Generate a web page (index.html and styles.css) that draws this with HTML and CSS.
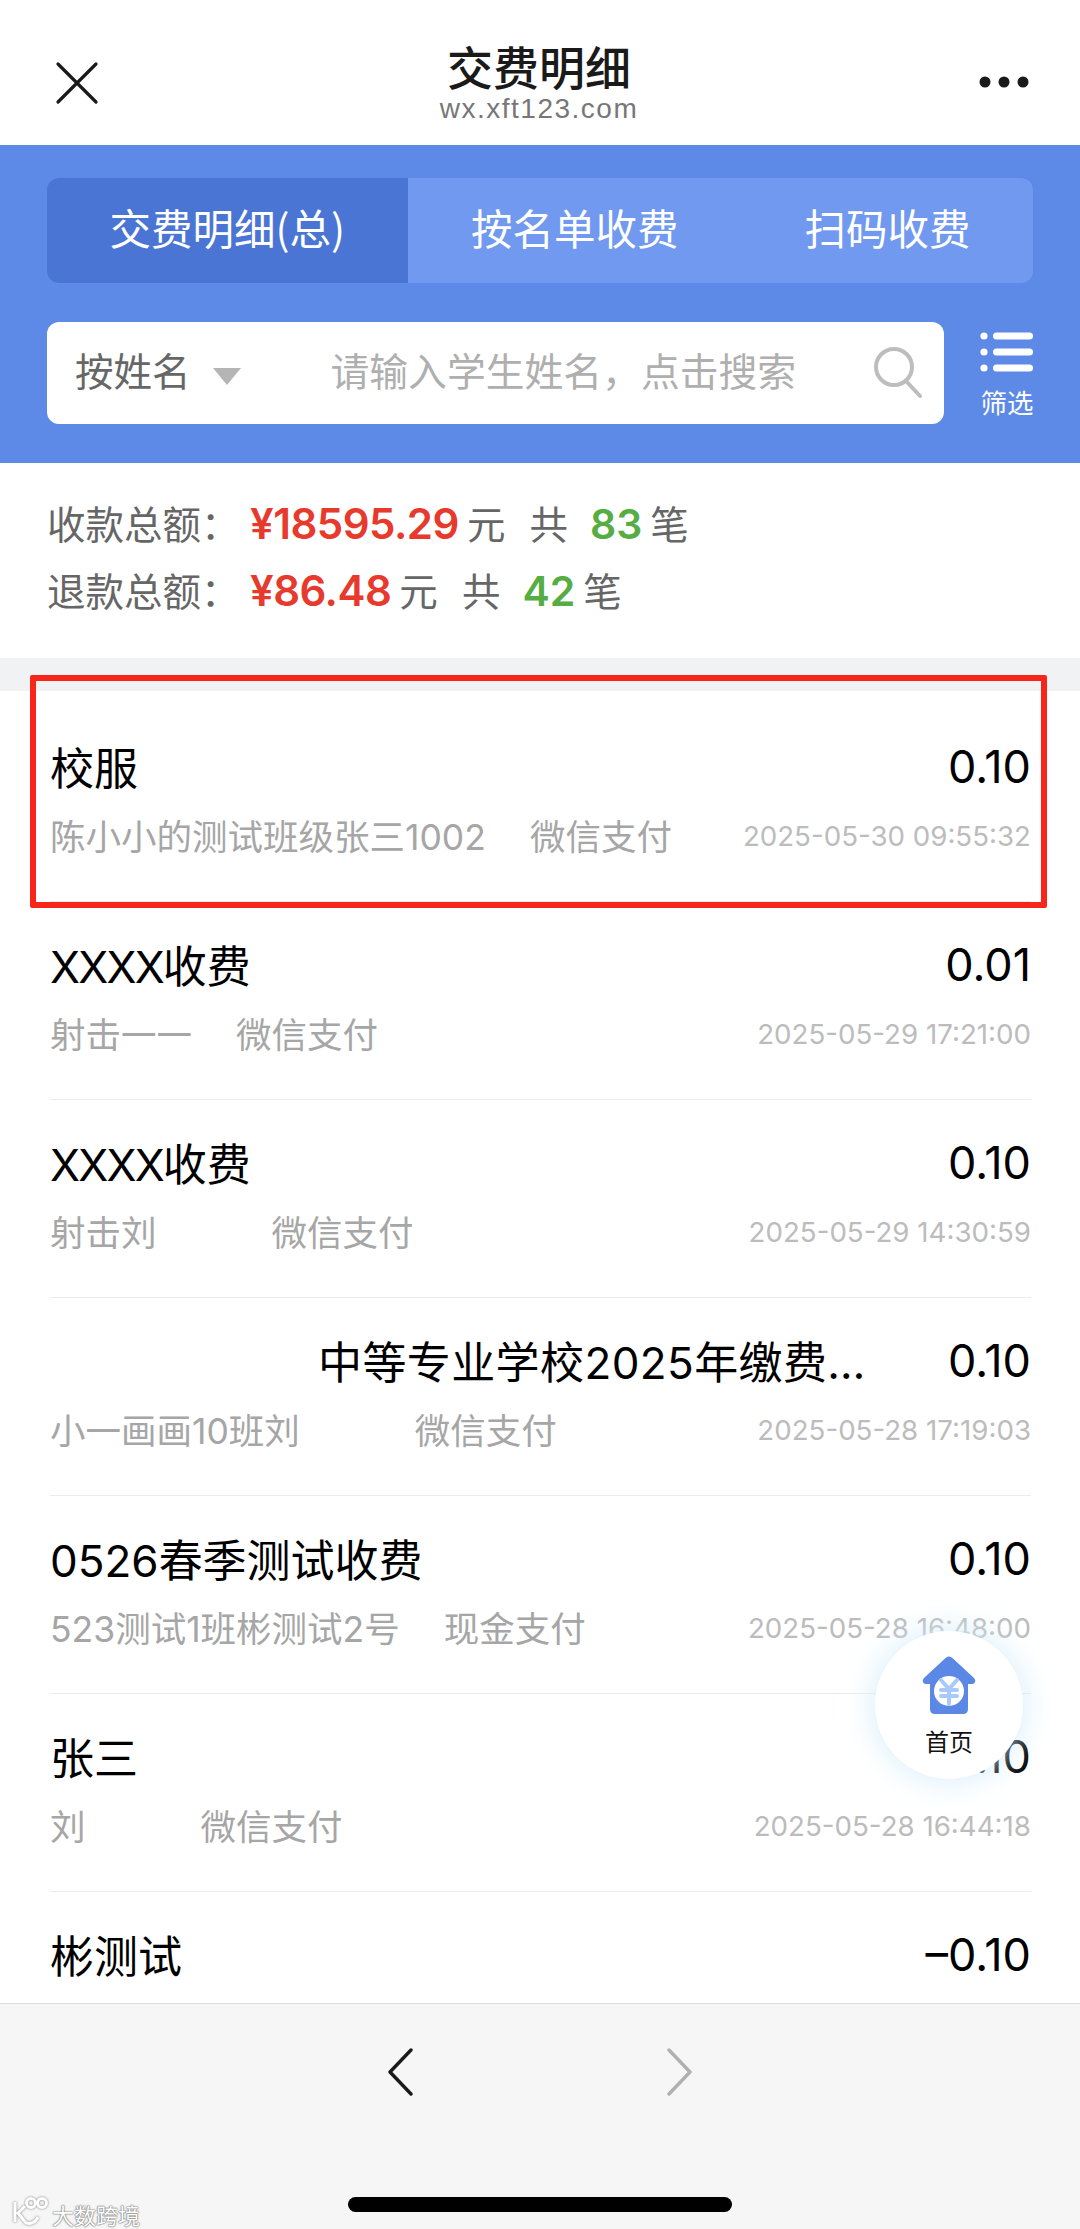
FILE: index.html
```html
<!DOCTYPE html>
<html lang="zh">
<head>
<meta charset="utf-8">
<title>交费明细</title>
<link rel="stylesheet" href="styles.css">
</head>
<body>
<div class="page">
  <header class="nav">
    <svg class="nav-close" width="44" height="44" viewBox="0 0 44 44"><path d="M3 3 L41 41 M41 3 L3 41" stroke="#1a1a1a" stroke-width="3.2" stroke-linecap="round"/></svg>
    <div class="nav-titles">
      <div class="nav-title">交费明细</div>
      <div class="nav-url">wx.xft123.com</div>
    </div>
    <svg class="nav-more" width="50" height="12" viewBox="0 0 50 12"><circle cx="6" cy="6" r="5.5" fill="#1a1a1a"/><circle cx="25" cy="6" r="5.5" fill="#1a1a1a"/><circle cx="44" cy="6" r="5.5" fill="#1a1a1a"/></svg>
  </header>

  <section class="blue">
    <div class="tabs">
      <div class="tab tab-active">交费明细(总)</div>
      <div class="tab">按名单收费</div>
      <div class="tab">扫码收费</div>
    </div>
    <div class="search-row">
      <div class="search">
        <span class="search-type">按姓名</span>
        <span class="search-caret"></span>
        <span class="search-ph">请输入学生姓名，点击搜索</span>
        <svg class="search-icon" width="50" height="54" viewBox="0 0 50 54"><circle cx="21" cy="21" r="18" fill="none" stroke="#bdbdbd" stroke-width="4"/><path d="M33 35 L47 50" stroke="#bdbdbd" stroke-width="4" stroke-linecap="round"/></svg>
      </div>
      <div class="filter">
        <svg width="54" height="40" viewBox="0 0 54 40"><g fill="#fff"><circle cx="4" cy="4" r="3.6"/><circle cx="4" cy="20" r="3.6"/><circle cx="4" cy="36" r="3.6"/><rect x="13" y="0.500" width="40" height="7" rx="3.500"/><rect x="13" y="16.500" width="40" height="7" rx="3.500"/><rect x="13" y="32.500" width="40" height="7" rx="3.500"/></g></svg>
        <span class="filter-label">筛选</span>
      </div>
    </div>
  </section>

  <section class="summary">
    <div class="sum-line"><span class="sum-label">收款总额：</span><b class="money">¥18595.29</b><span class="unit">元</span><span class="unit gong">共</span><b class="count">83</b><span class="unit">笔</span></div>
    <div class="sum-line"><span class="sum-label">退款总额：</span><b class="money">¥86.48</b><span class="unit">元</span><span class="unit gong">共</span><b class="count">42</b><span class="unit">笔</span></div>
  </section>

  <div class="gap"></div>

  <main class="list">
    <article class="row">
      <div class="row-top"><div class="row-title">校服</div><div class="row-amt">0.10</div></div>
      <div class="row-sub"><span class="row-name">陈小小的测试班级张三1002</span><span class="row-pay">微信支付</span><span class="row-date">2025-05-30 09:55:32</span></div>
    </article>
    <article class="row">
      <div class="row-top"><div class="row-title"><span class="xs">XXXX</span>收费</div><div class="row-amt">0.01</div></div>
      <div class="row-sub"><span class="row-name">射击一一</span><span class="row-pay">微信支付</span><span class="row-date">2025-05-29 17:21:00</span></div>
    </article>
    <article class="row">
      <div class="row-top"><div class="row-title"><span class="xs">XXXX</span>收费</div><div class="row-amt">0.10</div></div>
      <div class="row-sub"><span class="row-name mask-a">射击刘</span><span class="row-pay">微信支付</span><span class="row-date">2025-05-29 14:30:59</span></div>
    </article>
    <article class="row">
      <div class="row-top"><div class="row-title title-masked">中等专业学校2025年缴费…</div><div class="row-amt">0.10</div></div>
      <div class="row-sub"><span class="row-name mask-b">小一画画10班刘</span><span class="row-pay">微信支付</span><span class="row-date">2025-05-28 17:19:03</span></div>
    </article>
    <article class="row">
      <div class="row-top"><div class="row-title">0526春季测试收费</div><div class="row-amt">0.10</div></div>
      <div class="row-sub"><span class="row-name">523测试1班彬测试2号</span><span class="row-pay">现金支付</span><span class="row-date">2025-05-28 16:48:00</span></div>
    </article>
    <article class="row">
      <div class="row-top"><div class="row-title">张三</div><div class="row-amt">0.10</div></div>
      <div class="row-sub"><span class="row-name mask-c">刘</span><span class="row-pay">微信支付</span><span class="row-date">2025-05-28 16:44:18</span></div>
    </article>
    <article class="row">
      <div class="row-top"><div class="row-title">彬测试</div><div class="row-amt">–0.10</div></div>
    </article>
  </main>

  <footer class="bottom">
    <svg class="chev" width="26" height="48" viewBox="0 0 26 48"><path d="M24 2 L3 24 L24 46" fill="none" stroke="#1a1a1a" stroke-width="3.4" stroke-linecap="round" stroke-linejoin="round"/></svg>
    <svg class="chev" width="26" height="48" viewBox="0 0 26 48"><path d="M2 2 L23 24 L2 46" fill="none" stroke="#b0b0b0" stroke-width="3.4" stroke-linecap="round" stroke-linejoin="round"/></svg>
    <div class="home-bar"></div>
  </footer>

  <div class="highlight"></div>

  <div class="home-fab">
    <svg width="54" height="58" viewBox="0 0 54 58">
      <path d="M27 0.500 Q29 0.500 31 2.500 L52 22 Q55 26 51 28 L46 28 L46 53 Q46 58 41 58 L13 58 Q8 58 8 53 L8 28 L3 28 Q-1 26 2 22 L23 2.500 Q25 0.500 27 0.500 Z" fill="#5b88e4"/>
      <circle cx="27" cy="35" r="15" fill="#fff"/>
      <path d="M19 24 L27 33 L35 24 M19 34 H35 M19 40 H35 M27 33 V48" fill="none" stroke="#a9c8fb" stroke-width="4" stroke-linecap="round"/>
    </svg>
    <span class="home-label">首页</span>
  </div>

  <div class="mark">
    <svg class="mark-logo" width="38" height="30" viewBox="0 0 38 30"><g fill="none" stroke="#fff" stroke-width="3"><path d="M3 6 V26 M13 10 L6 17 L14 27 Q22 29 26 21"/><circle cx="19" cy="7" r="4.500"/><circle cx="30" cy="7" r="4.500"/></g></svg>
    <span class="mark-text">大数跨境</span>
  </div>
</div>
</body>
</html>
```
FILE: styles.css
```css
* { box-sizing: border-box; }
html, body { margin: 0; padding: 0; }
body {
  font-family: Inter, "Noto Sans CJK SC", sans-serif;
  background: #fff;
  color: #000;
}
.page {
  position: relative;
  width: 1080px;
  height: 2229px;
  display: flex;
  flex-direction: column;
  overflow: hidden;
}

/* top navigation */
.nav {
  height: 145px;
  flex: none;
  display: flex;
  align-items: flex-start;
  justify-content: space-between;
  padding: 0 51px 0 55px;
  background: #fff;
}
.nav-close { margin-top: 61px; }
.nav-more { margin-top: 76px; }
.nav-titles { text-align: center; padding-top: 37px; }
.nav-title {
  font-family: "Noto Sans CJK SC", sans-serif;
  font-size: 46px;
  line-height: 56px;
  font-weight: 500;
  color: #1a1a1a;
}
.nav-url {
  font-family: "Liberation Sans", sans-serif;
  font-size: 28px;
  line-height: 32px;
  letter-spacing: 1.5px;
  color: #777;
}

/* blue panel */
.blue {
  height: 318px;
  flex: none;
  background: #5c8ae6;
  padding: 33px 47px 0;
}
.tabs {
  height: 105px;
  display: flex;
  justify-content: space-between;
  background: #7099ef;
  border-radius: 12px;
  overflow: hidden;
}
.tab {
  display: flex;
  align-items: center;
  padding: 0 62.500px 8px;
  font-family: "Noto Sans CJK SC", sans-serif;
  font-size: 41.500px;
  white-space: nowrap;
  color: #fff;
}
.tab-active { background: #4a75d4; }
.search-row {
  display: flex;
  justify-content: space-between;
  margin-top: 39px;
}
.search {
  width: 897px;
  height: 102px;
  background: #fff;
  border-radius: 12px;
  display: flex;
  align-items: center;
  padding: 0 21px 0 28px;
  font-family: "Noto Sans CJK SC", sans-serif;
}
.search-type { font-size: 38.500px; color: #666; padding-bottom: 8px; }
.search-caret {
  width: 0;
  height: 0;
  margin: 6px 0 0 22px;
  border-left: 14px solid transparent;
  border-right: 14px solid transparent;
  border-top: 17px solid #b5b5b5;
}
.search-ph {
  margin-left: 90px;
  flex: 1;
  font-size: 38.800px;
  padding-bottom: 8px;
  color: #afafaf;
  white-space: nowrap;
}
.search-icon { flex: none; }
.filter {
  width: 54px;
  display: flex;
  flex-direction: column;
  align-items: center;
  padding-top: 10px;
  margin-right: -1px;
}
.filter-label {
  font-family: "Noto Sans CJK SC", sans-serif;
  font-size: 26.500px;
  line-height: 36px;
  margin-top: 12px;
  color: #fff;
  white-space: nowrap;
}

/* totals */
.summary {
  height: 195px;
  flex: none;
  padding: 25px 0 0 47px;
}
.sum-line {
  height: 67px;
  display: flex;
  align-items: center;
  font-family: "Noto Sans CJK SC", sans-serif;
  font-size: 38.500px;
  color: #666;
}
.sum-label { width: 203px; white-space: nowrap; }
.money { font-family: Inter, sans-serif; font-size: 42px; font-weight: 600; color: #e7392c; letter-spacing: -0.5px; padding-top: 4px; }
.count { font-family: Inter, sans-serif; font-size: 41px; font-weight: 600; color: #55ad44; margin: 0 8px 0 0; padding-top: 4px; }
.unit { margin-left: 8px; }
.gong { margin: 0 22px 0 24px; }
.count + .unit { margin-left: 0; }
.gap { height: 33px; flex: none; background: #f1f2f4; }

/* records */
.list {
  flex: 1;
  min-height: 0;
  overflow: hidden;
  padding: 13px 49px 0 50px;
}
.row {
  height: 198px;
  border-bottom: 1px solid #ececec;
  overflow: hidden;
  padding-top: 33px;
}
.row-top {
  display: flex;
  justify-content: space-between;
  align-items: center;
  height: 58px;
  font-size: 44px;
  white-space: nowrap;
}
.xs { letter-spacing: -1.8px; }
.row-amt { font-size: 45px; }
.title-masked { padding-left: 268px; letter-spacing: 0.4px; }
.row-sub {
  display: flex;
  align-items: center;
  height: 48px;
  margin-top: 15px;
  white-space: nowrap;
  font-size: 35.500px;
  color: #a6a6a6;
}
.row-pay { margin-left: 44px; }
.row-date { margin-left: auto; padding-top: 3px; font-size: 27.700px; color: #bcbcbc; }
.mask-a { padding-right: 71px; }
.mask-b { padding-right: 71px; }
.mask-c { padding-right: 71px; }

/* bottom toolbar */
.bottom {
  position: relative;
  height: 226px;
  flex: none;
  background: #f6f6f6;
  border-top: 1px solid #dedede;
  display: flex;
  justify-content: center;
  gap: 254px;
  padding-top: 44px;
}
.chev { flex: none; }
.home-bar {
  position: absolute;
  left: 348px;
  top: 193px;
  width: 384px;
  height: 15px;
  border-radius: 8px;
  background: #000;
}

/* overlays */
.highlight {
  position: absolute;
  left: 30px;
  top: 675px;
  width: 1017px;
  height: 233px;
  border: 6px solid #f7261a;
  border-radius: 2px;
}
.home-fab {
  position: absolute;
  left: 875px;
  top: 1631px;
  width: 148px;
  height: 148px;
  border-radius: 50%;
  background: #fff;
  box-shadow: 0 0 34px #d3ecfa;
  display: flex;
  flex-direction: column;
  align-items: center;
  padding-top: 25px;
}
.home-label {
  font-family: "Noto Sans CJK SC", sans-serif;
  font-size: 24px;
  line-height: 34px;
  margin-top: 10px;
  color: #111;
}
.mark {
  position: absolute;
  left: 12px;
  top: 2193px;
  display: flex;
  align-items: center;
  gap: 2px;
}
.mark-logo { filter: drop-shadow(0 0 1px #777); }
.mark-text {
  font-family: "Noto Sans CJK SC", sans-serif;
  font-size: 22px;
  line-height: 30px;
  margin-top: 6px;
  color: #fff;
  text-shadow: 0 0 2px #777, 0 0 1px #777, 0 0 1px #777;
  white-space: nowrap;
}
```
